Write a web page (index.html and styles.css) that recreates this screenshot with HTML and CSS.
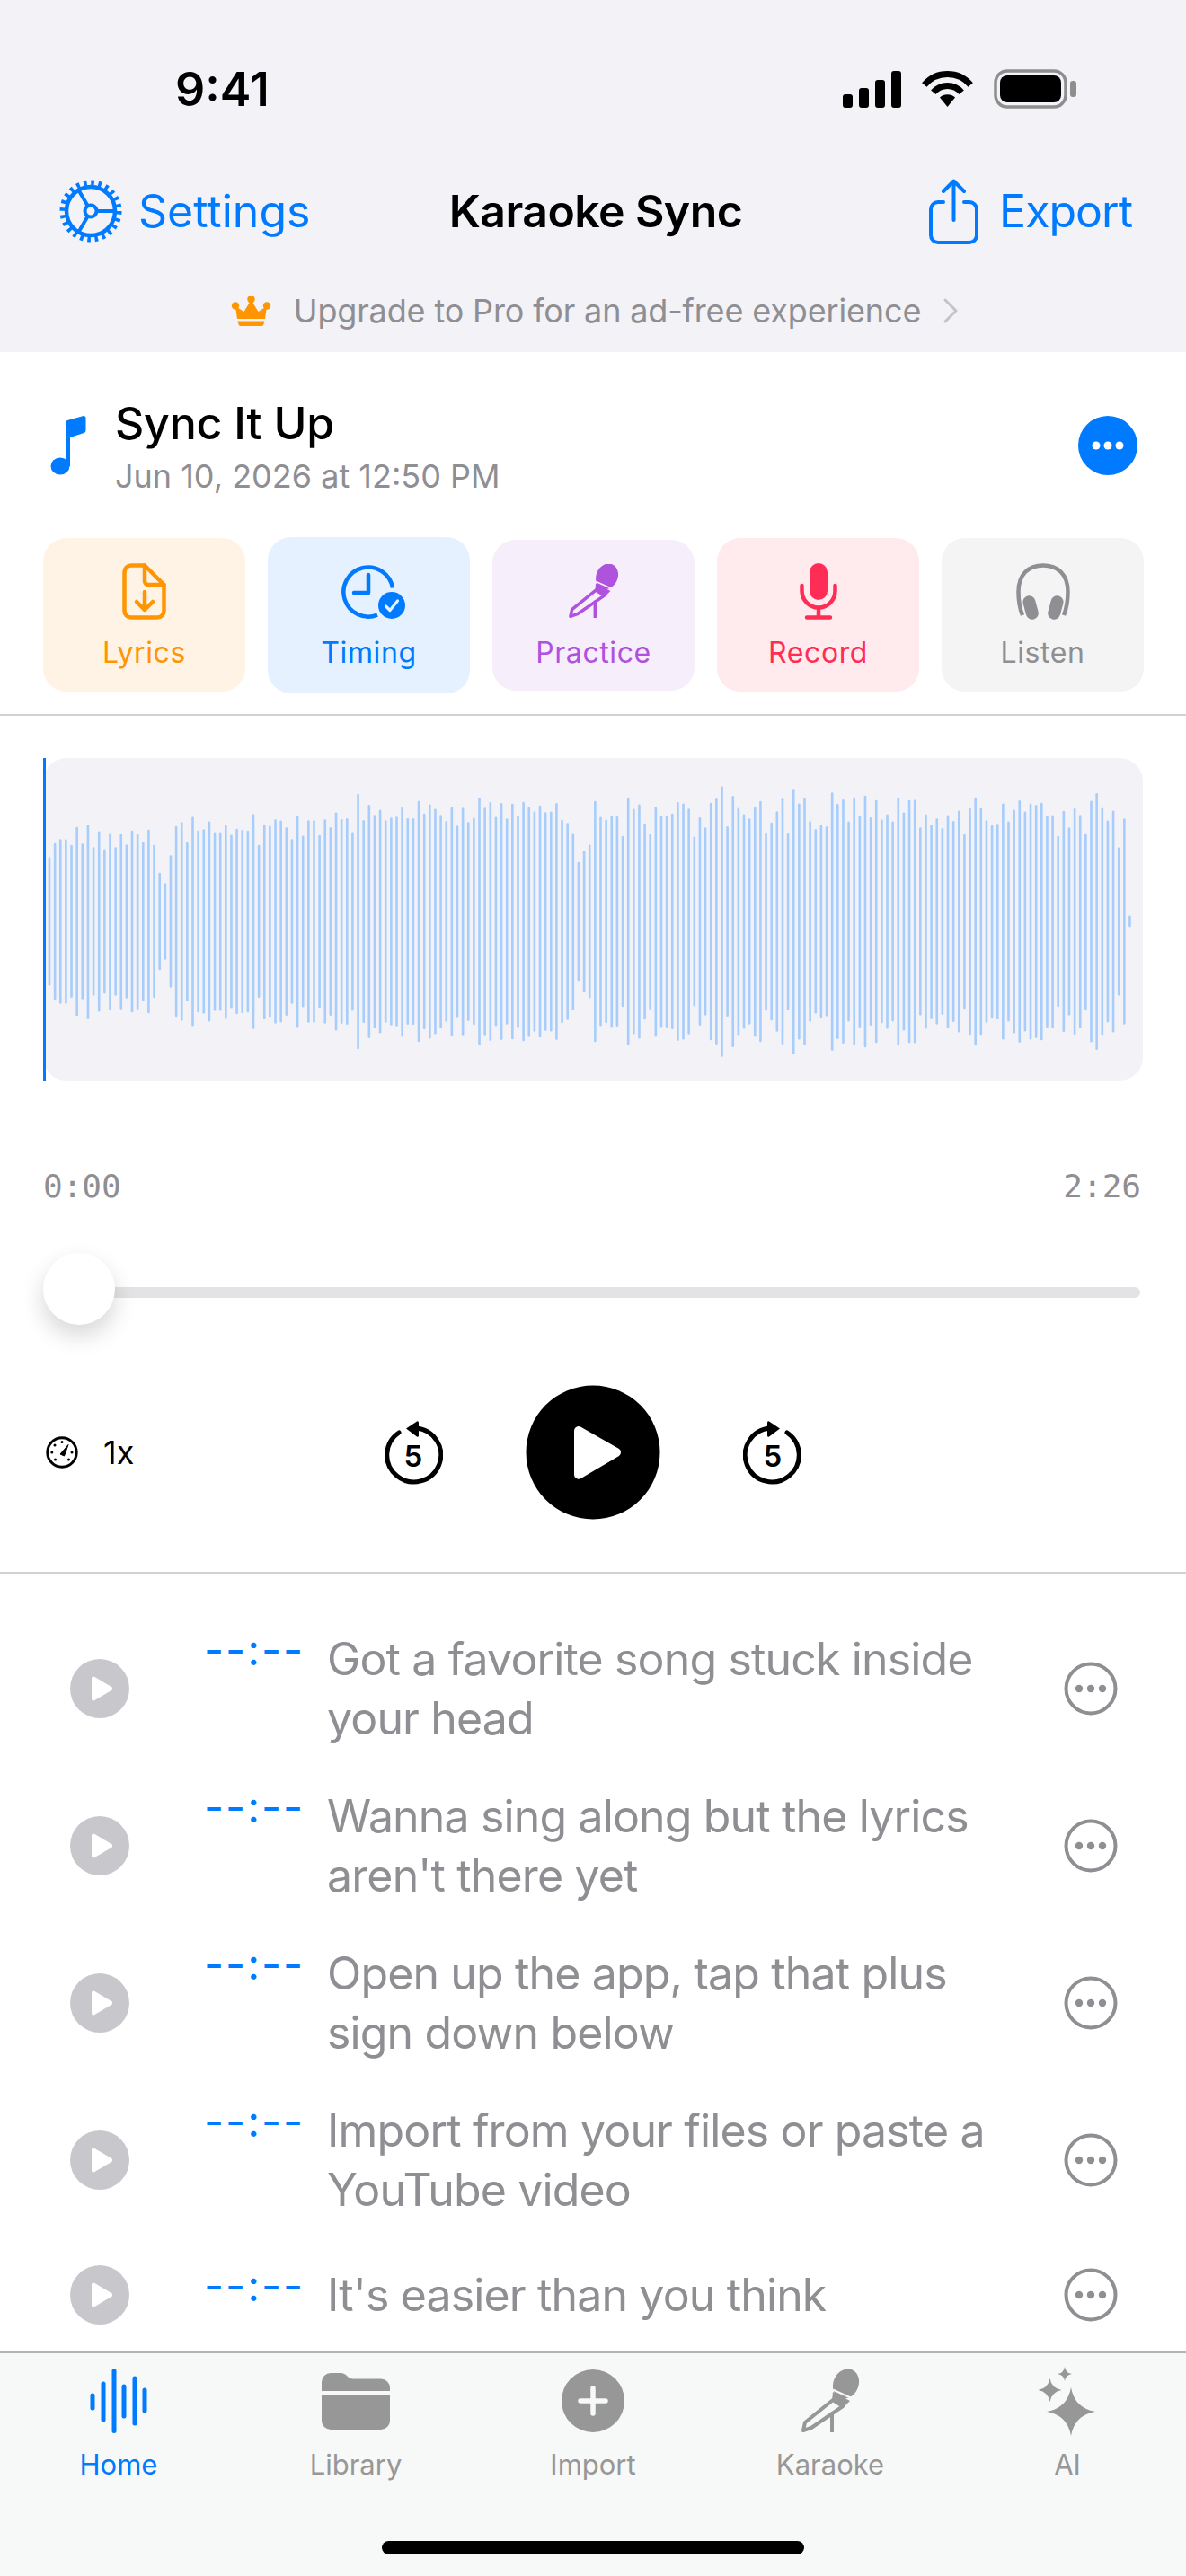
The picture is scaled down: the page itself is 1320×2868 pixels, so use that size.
FILE: index.html
```html
<!DOCTYPE html>
<html lang="en">
<head>
<meta charset="UTF-8">
<meta name="viewport" content="width=device-width, initial-scale=1.0">
<title>Karaoke Sync</title>
<link rel="stylesheet" href="styles.css">
</head>
<body>
<svg class="sprites">
    <symbol id="line-play" viewBox="0 0 66 66"><circle cx="33" cy="33" r="33" fill="#c7c7cc"/><path d="M24 21.5a2 2 0 0 1 3-1.7L46 31a2.3 2.3 0 0 1 0 4L27 46.2a2 2 0 0 1-3-1.700Z" fill="#fff"/></symbol>
    <symbol id="line-more" viewBox="0 0 60 60"><circle cx="30" cy="30" r="27.5" fill="none" stroke="#8e8e93" stroke-width="4"/><circle cx="17" cy="30" r="4.2" fill="#8e8e93"/><circle cx="30" cy="30" r="4.2" fill="#8e8e93"/><circle cx="43" cy="30" r="4.2" fill="#8e8e93"/></symbol>
    <symbol id="skip-arrow" viewBox="0 0 66 72"><path d="M17 14A30 30 0 1 0 36 9" fill="none" stroke="#000" stroke-width="5" stroke-linecap="round"/><path d="M37 1.5L25 9.5L37 18.5a1.5 1.5 0 0 0 2-1V2.5a1.5 1.5 0 0 0-2-1Z"/></symbol>
</svg>

<div id="app">
    <header class="top">
        <div class="status">
            <span class="clock">9:41</span>
            <div class="status-icons">
                <svg width="65" height="41" viewBox="0 0 65 41"><rect x="0" y="26" width="11" height="15" rx="3"/><rect x="18" y="19" width="11" height="22" rx="3"/><rect x="36" y="10" width="11" height="31" rx="3"/><rect x="54" y="0" width="11" height="41" rx="3"/></svg>
                <svg width="57" height="42" viewBox="0 0 57 42" fill="none" stroke="#000" stroke-width="7"><path d="M2.8 16.5A33.5 33.5 0 0 1 54.2 16.5"/><path d="M12.8 24.8A20.5 20.5 0 0 1 44.2 24.8"/><path d="M28.5 41L20 30.5A13 13 0 0 1 37 30.5Z" fill="#000" stroke="none"/></svg>
                <svg width="92" height="44" viewBox="0 0 92 44"><rect x="2" y="2" width="78" height="40" rx="13" fill="none" stroke="#8e8e8e" stroke-width="3.5"/><rect x="7" y="7" width="68" height="30" rx="8"/><rect x="85" y="13" width="7" height="18" rx="3" fill="#8e8e8e"/></svg>
            </div>
        </div>
        <nav class="nav">
            <a class="nav-btn">
                <svg width="70" height="70" viewBox="0 0 70 70" fill="none" stroke="#007aff"><circle cx="35" cy="35" r="27" stroke-width="4.5"/><circle cx="35" cy="35" r="31.5" stroke-width="6" stroke-dasharray="3.6 4.65"/><circle cx="35" cy="35" r="6.5" stroke-width="4"/><path d="M41.5 35H60M31.7 29.3L21.5 11.7M31.7 40.7L21.5 58.3" stroke-width="4"/></svg>
                <span>Settings</span>
            </a>
            <h1>Karaoke Sync</h1>
            <a class="nav-btn nav-right">
                <svg width="55" height="73" viewBox="0 0 55 73" fill="none" stroke="#007aff" stroke-width="4" stroke-linecap="round" stroke-linejoin="round"><path d="M16 26H10a8 8 0 0 0-8 8V63a8 8 0 0 0 8 8H45a8 8 0 0 0 8-8V34a8 8 0 0 0-8-8H39"/><path d="M27.5 46V3M16 14L27.5 2.5L39 14"/></svg>
                <span>Export</span>
            </a>
        </nav>
        <div class="promo">
            <svg width="46" height="34" viewBox="0 0 46 34" fill="#ff9500"><circle cx="5" cy="11.5" r="4.2"/><circle cx="22.5" cy="4.2" r="4.2"/><circle cx="40" cy="11.5" r="4.2"/><path d="M7 26L5 12L14.5 18L22.5 5L30.5 18L40 12L38 26Z"/><path d="M7.5 28.5H37.5L36.5 32a2.5 2.5 0 0 1-2.5 2H11a2.5 2.5 0 0 1-2.5-2Z"/></svg>
            <span>Upgrade to Pro for an ad-free experience</span>
            <svg width="18" height="30" viewBox="0 0 18 30" fill="none" stroke="#c4c4c6" stroke-width="3" stroke-linecap="round" stroke-linejoin="round"><path d="M3 3L15 15L3 27"/></svg>
        </div>
    </header>

    <section class="song">
        <svg width="40" height="66" viewBox="0 0 40 66" fill="#007aff"><ellipse cx="11" cy="56" rx="10.5" ry="9.5"/><path d="M17 8a3 3 0 0 1 2-3L36 .3A2.5 2.5 0 0 1 39.5 3V16a3 3 0 0 1-2 3L22 24V56H17Z"/></svg>
        <div class="song-text">
            <div class="song-title">Sync It Up</div>
            <div class="song-date">Jun 10, 2026 at 12:50 PM</div>
        </div>
        <svg width="66" height="66" viewBox="0 0 66 66"><circle cx="33" cy="33" r="33" fill="#007aff"/><circle cx="20" cy="33" r="4.5" fill="#fff"/><circle cx="33" cy="33" r="4.5" fill="#fff"/><circle cx="46" cy="33" r="4.5" fill="#fff"/></svg>
    </section>

    <section class="tools">
        <div class="tool tool-lyrics">
            <div class="tool-icon"><svg width="49" height="63" viewBox="0 0 49 63" fill="none" stroke="#ff9500" stroke-width="4.5" stroke-linecap="round" stroke-linejoin="round"><path d="M2.5 10A7.5 7.5 0 0 1 10 2.5H25L46.5 24V53A7.5 7.5 0 0 1 39 60.5H10A7.5 7.5 0 0 1 2.5 53Z"/><path d="M25 2.5V20a4 4 0 0 0 4 4H46.5"/><path d="M25 32V52M16 43L25 52L34 43"/></svg></div>
            <span>Lyrics</span>
        </div>
        <div class="tool tool-timing">
            <div class="tool-icon"><svg class="timing-svg" width="71" height="60" viewBox="0 0 71 60" fill="none" stroke="#007aff" stroke-width="4.5" stroke-linecap="round" stroke-linejoin="round"><path d="M57 25.5A27.5 27.5 0 1 0 40 55.6" stroke-linecap="butt"/><path d="M30 11V31H14"/><circle cx="56" cy="45" r="15" fill="#007aff" stroke="none"/><path d="M49.5 46L54 50.5L62.5 40" stroke="#e5f1ff" stroke-width="3.2"/></svg></div>
            <span>Timing</span>
        </div>
        <div class="tool tool-practice">
            <div class="tool-icon"><svg width="60" height="60" viewBox="0 0 67 70" fill="none" stroke="#af52de" stroke-width="4" stroke-linejoin="round" stroke-linecap="round"><ellipse cx="50.5" cy="16" rx="14" ry="17" transform="rotate(25 50.5 16)" fill="#af52de" stroke="none"/><path d="M36 25L55 35L48 42L35 35Z" fill="#af52de" stroke="none"/><path d="M37 23L59 33" stroke="#f6eefb" stroke-width="2"/><path d="M36 34L47 41L12 65L3 68L5 59Z"/><path d="M35 49V69"/></svg></div>
            <span>Practice</span>
        </div>
        <div class="tool tool-record">
            <div class="tool-icon"><svg width="44" height="63" viewBox="0 0 44 63" fill="none" stroke="#ff2d55" stroke-width="4.5" stroke-linecap="round"><rect x="12" y="0" width="20" height="41" rx="10" fill="#ff2d55" stroke="none"/><path d="M3.5 25V31a18.5 18.5 0 0 0 37 0V25"/><path d="M22 50V60M9 60.5H35"/></svg></div>
            <span>Record</span>
        </div>
        <div class="tool tool-listen">
            <div class="tool-icon"><svg width="60" height="64" viewBox="0 0 60 64" fill="none" stroke="#8e8e93" stroke-width="4.5"><path d="M7 58C3 48 2.5 40 2.5 32C2.5 12 14 2.5 30 2.5S57.5 12 57.5 32C57.5 40 57 48 53 58"/><rect x="9" y="36" width="14" height="27" rx="7" transform="rotate(-15 16 49)" fill="#8e8e93" stroke="none"/><rect x="37" y="36" width="14" height="27" rx="7" transform="rotate(15 44 49)" fill="#8e8e93" stroke="none"/></svg></div>
            <span>Listen</span>
        </div>
    </section>

    <section class="player">
        <div class="wave">
            <svg id="bars" width="1224" height="359" viewBox="0 0 1224 359"></svg>
            <div class="playhead"></div>
        </div>
        <div class="times">
            <span>0:00</span>
            <span>2:26</span>
        </div>
        <div class="slider">
            <div class="track"></div>
            <div class="thumb"></div>
        </div>
        <div class="controls">
            <div class="speed">
                <svg width="36" height="36" viewBox="0 0 36 36" fill="none" stroke="#000"><circle cx="18" cy="18" r="16.2" stroke-width="3"/><path d="M16 20L25 9.5L20.5 22Z" fill="#000" stroke="#000" stroke-width="1" stroke-linejoin="round"/><path d="M18 6.5v.1M10 10v.1M6.8 18v.1M29 18v.1M10.5 26v.1M25.5 26v.1" stroke-width="3" stroke-linecap="round"/></svg>
                <span>1x</span>
            </div>
            <div class="transport">
                <svg width="66" height="72" viewBox="0 0 66 72"><use href="#skip-arrow"/><text class="skip-num" x="33" y="52" text-anchor="middle">5</text></svg>
                <svg width="150" height="150" viewBox="0 0 150 150"><circle cx="75" cy="75" r="74.5"/><path d="M54 51a5 5 0 0 1 7.5-4.3L104 71a5 5 0 0 1 0 8L61.5 104a5 5 0 0 1-7.5-4.3Z" fill="#fff"/></svg>
                <svg width="66" height="72" viewBox="0 0 66 72"><use href="#skip-arrow" transform="translate(66 0) scale(-1 1)"/><text class="skip-num" x="33" y="52" text-anchor="middle">5</text></svg>
            </div>
            <div></div>
        </div>
    </section>

    <section class="lyrics">
        <div class="line">
            <svg width="66" height="66"><use href="#line-play"/></svg>
            <div class="line-body">
                <span class="line-time">--:--</span>
                <p>Got a favorite song stuck inside your head</p>
            </div>
            <svg width="60" height="60"><use href="#line-more"/></svg>
        </div>
        <div class="line">
            <svg width="66" height="66"><use href="#line-play"/></svg>
            <div class="line-body">
                <span class="line-time">--:--</span>
                <p>Wanna sing along but the lyrics aren't there yet</p>
            </div>
            <svg width="60" height="60"><use href="#line-more"/></svg>
        </div>
        <div class="line">
            <svg width="66" height="66"><use href="#line-play"/></svg>
            <div class="line-body">
                <span class="line-time">--:--</span>
                <p>Open up the app, tap that plus sign down below</p>
            </div>
            <svg width="60" height="60"><use href="#line-more"/></svg>
        </div>
        <div class="line">
            <svg width="66" height="66"><use href="#line-play"/></svg>
            <div class="line-body">
                <span class="line-time">--:--</span>
                <p>Import from your files or paste a YouTube video</p>
            </div>
            <svg width="60" height="60"><use href="#line-more"/></svg>
        </div>
        <div class="line">
            <svg width="66" height="66"><use href="#line-play"/></svg>
            <div class="line-body">
                <span class="line-time">--:--</span>
                <p>It's easier than you think</p>
            </div>
            <svg width="60" height="60"><use href="#line-more"/></svg>
        </div>
    </section>

    <footer class="tabbar">
        <div class="tabs">
            <div class="tab tab-active">
                <div class="tab-icon"><svg width="64" height="72" viewBox="0 0 64 72" fill="none" stroke="#007aff" stroke-width="5" stroke-linecap="round"><path d="M3 30V44M15 17V57M27 2.5V69.5M38 20V53M50 11V61M61 24V47"/></svg></div>
                <span>Home</span>
            </div>
            <div class="tab">
                <div class="tab-icon"><svg width="76" height="63" viewBox="0 0 76 63" fill="#979797"><path d="M0 20V10A10 10 0 0 1 10 0H20C25 0 27 2 29 4S33 6.5 37 6.5H66A10 10 0 0 1 76 16.5V20Z"/><path d="M0 24H76V53A10 10 0 0 1 66 63H10A10 10 0 0 1 0 53Z"/></svg></div>
                <span>Library</span>
            </div>
            <div class="tab">
                <div class="tab-icon"><svg width="70" height="70" viewBox="0 0 70 70"><circle cx="35" cy="35" r="35" fill="#979797"/><path d="M35 21V49M21 35H49" stroke="#f7f8f8" stroke-width="5.5" stroke-linecap="round"/></svg></div>
                <span>Import</span>
            </div>
            <div class="tab">
                <div class="tab-icon"><svg width="67" height="70" viewBox="0 0 67 70" fill="none" stroke="#979797" stroke-width="4" stroke-linejoin="round" stroke-linecap="round"><ellipse cx="50.5" cy="16" rx="14" ry="17" transform="rotate(25 50.5 16)" fill="#979797" stroke="none"/><path d="M36 25L55 35L48 42L35 35Z" fill="#979797" stroke="none"/><path d="M37 23L59 33" stroke="#f7f8f8" stroke-width="2"/><path d="M36 34L47 41L12 65L3 68L5 59Z"/><path d="M35 49V69"/></svg></div>
                <span>Karaoke</span>
            </div>
            <div class="tab">
                <div class="tab-icon"><svg width="66" height="78" viewBox="0 0 66 78" fill="#979797"><path d="M37 24Q41 47 64 51Q41 55 37 78Q33 55 10 51Q33 47 37 24Z"/><path d="M13.5 14Q15.5 25 26.5 27Q15.5 29 13.5 40Q11.5 29 .5 27Q11.5 25 13.5 14Z"/><path d="M30 1Q31 8 38 9Q31 10 30 17Q29 10 22 9Q29 8 30 1Z"/></svg></div>
                <span>AI</span>
            </div>
        </div>
        <div class="home-bar"></div>
    </footer>
</div>

<script>
    // peak size of each bar, left to right
    const peaks = [
        213, 259, 273, 273, 253, 313, 258, 321, 246, 299, 239, 293, 246, 291, 255, 301, 291, 263, 304, 253,
        161, 127, 219, 316, 329, 263, 346, 301, 305, 331, 296, 296, 320, 287, 307, 303, 301, 356, 253, 322,
        317, 338, 334, 312, 273, 349, 284, 335, 335, 286, 338, 312, 361, 339, 342, 296, 423, 336, 386, 353,
        370, 335, 344, 347, 379, 342, 342, 399, 357, 388, 373, 353, 332, 378, 317, 377, 329, 343, 410, 377,
        395, 346, 392, 341, 390, 350, 396, 380, 365, 384, 362, 364, 392, 337, 326, 293, 197, 235, 254,
        399, 346, 337, 349, 348, 283, 409, 373, 388, 325, 291, 379, 349, 351, 357, 395, 391, 374, 281, 345,
        311, 393, 407, 448, 315, 416, 376, 355, 341, 379, 399, 295, 328, 365, 407, 294, 439, 391, 409, 332,
        305, 319, 314, 427, 389, 404, 331, 409, 351, 417, 345, 402, 337, 355, 331, 411, 361, 402, 403, 311,
        355, 321, 341, 309, 352, 333, 367, 289, 375, 411, 375, 335, 319, 323, 391, 331, 370, 401, 364, 391,
        386, 393, 351, 352, 283, 366, 311, 375, 353, 292, 400, 425, 376, 334, 367, 245, 341, 19
    ];

    const bars = document.getElementById("bars");
    peaks.forEach((peak, i) => {
        const height = peak * 0.673;
        const bar = document.createElementNS("http://www.w3.org/2000/svg", "rect");
        bar.setAttribute("class", "bar");
        bar.setAttribute("x", 5.7 + i * 6.135);
        bar.setAttribute("y", 182 - height / 2);
        bar.setAttribute("width", 2.6);
        bar.setAttribute("height", height);
        bar.setAttribute("rx", 1.3);
        bars.appendChild(bar);
    });
</script>
</body>
</html>
```
FILE: styles.css
```css
* {
    box-sizing: border-box;
}

body {
    margin: 0;
    font-family: Inter, "Noto Sans", sans-serif;
    background-color: #fff;
    color: #000;
}

.sprites {
    display: none;
}

#app {
    width: 1320px;
    height: 2868px;
    display: flex;
    flex-direction: column;
    overflow: hidden;
}

svg {
    display: block;
    flex-shrink: 0;
}

/* header */
.top {
    background-color: #f2f2f7;
    height: 392px;
}

.status {
    height: 198px;
    padding: 0 122px 0 195px;
    display: flex;
    justify-content: space-between;
    align-items: center;
}

.clock {
    font-size: 52px;
    font-weight: 600;
}

.status-icons {
    display: flex;
    align-items: center;
    gap: 23px;
}

.nav {
    height: 74px;
    padding: 0 60px 0 66px;
    display: grid;
    grid-template-columns: 1fr auto 1fr;
    align-items: center;
}

.nav h1 {
    margin: 0;
    font-size: 50px;
    font-weight: 600;
    letter-spacing: -0.6px;
}

.nav-btn {
    display: flex;
    align-items: center;
    gap: 18px;
    font-size: 50px;
    color: #007aff;
}

.nav-right {
    justify-content: flex-end;
    gap: 23px;
    letter-spacing: -1px;
}

.promo {
    height: 92px;
    margin-top: 28px;
    padding-left: 4px;
    display: flex;
    justify-content: center;
    align-items: center;
    gap: 24px;
    font-size: 36px;
    letter-spacing: -0.15px;
    color: #8e8e93;
}

/* song */
.song {
    height: 207px;
    padding: 1px 54px 0 56px;
    display: flex;
    align-items: center;
}

.song-text {
    flex: 1;
    margin-left: 32px;
}

.song-title {
    font-size: 50px;
    font-weight: 500;
    line-height: 60px;
    letter-spacing: -0.2px;
}

.song-date {
    margin-top: 7px;
    font-size: 36px;
    line-height: 44px;
    color: #8e8e93;
}

.tools {
    height: 198px;
    padding: 0 48px;
    display: grid;
    grid-template-columns: repeat(5, 225px);
    gap: 25px;
    border-bottom: 2px solid #d1d1d6;
}

.tool {
    height: 171px;
    padding-top: 28px;
    border-radius: 26px;
    display: flex;
    flex-direction: column;
    align-items: center;
    font-size: 32px;
    letter-spacing: 0.6px;
}

.tool-icon {
    height: 63px;
    margin-bottom: 17px;
    display: flex;
    justify-content: center;
    align-items: center;
}

.tool span {
    line-height: 40px;
}

.timing-svg {
    margin-left: 10px;
}

.tool-lyrics {
    background-color: #fff3e5;
    color: #ff9500;
}

.tool-timing {
    height: 174px;
    margin-top: -1.5px;
    padding-top: 29.5px;
    background-color: #e5f1ff;
    color: #007aff;
}

.tool-practice {
    height: 168px;
    margin-top: 1.5px;
    padding-top: 26px;
    background-color: #f6eefb;
    color: #af52de;
}

.tool-record {
    background-color: #ffebee;
    color: #ff2d55;
}

.tool-listen {
    background-color: #f4f4f4;
    color: #8e8e93;
}

/* player */
.player {
    height: 955px;
    padding: 47px 48px 0;
    border-bottom: 2px solid #d1d1d6;
}

.wave {
    position: relative;
    height: 359px;
    background-color: #f2f2f7;
    border-radius: 26px;
}

.bar {
    fill: #a6cdfb;
}

.playhead {
    position: absolute;
    left: 0;
    top: 0;
    width: 3px;
    height: 100%;
    background-color: #007aff;
}

.times {
    margin-top: 97px;
    height: 40px;
    padding-right: 2px;
    display: flex;
    justify-content: space-between;
    align-items: center;
    font-family: "DejaVu Sans Mono", monospace;
    font-size: 36px;
    color: #8e8e93;
}

.slider {
    position: relative;
    height: 80px;
    margin: 55px 3px 0 0;
    display: flex;
    align-items: center;
}

.track {
    flex: 1;
    height: 12px;
    margin: 8px 0 0 32px;
    border-radius: 6px;
    background-color: #e3e3e5;
}

.thumb {
    position: absolute;
    left: 0;
    top: 0;
    width: 80px;
    height: 80px;
    border-radius: 50%;
    background-color: #fff;
    box-shadow: 0 12px 26px rgba(0, 0, 0, 0.16);
}

.controls {
    height: 150px;
    margin-top: 67px;
    display: grid;
    grid-template-columns: 1fr auto 1fr;
    align-items: center;
}

.speed {
    padding-left: 3px;
    display: flex;
    align-items: center;
    gap: 28px;
    font-size: 36px;
}

.transport {
    display: flex;
    align-items: center;
    gap: 92px;
}

.skip-num {
    font-family: Inter, sans-serif;
    font-size: 33px;
    font-weight: 600;
}

/* lyric lines */
.lyrics {
    flex: 1;
    min-height: 0;
    padding: 40px 0 0 78px;
    overflow: hidden;
}

.line {
    min-height: 125px;
    padding: 21.5px 0;
    display: flex;
    align-items: center;
    color: #8e8e93;
}

.line-body {
    display: flex;
    align-items: flex-start;
    margin: 0 80px 0 83px;
}

.line-time {
    width: 110px;
    font-size: 48px;
    line-height: 46px;
    letter-spacing: 2px;
    white-space: nowrap;
    color: #007aff;
}

.line p {
    width: 740px;
    margin: 0 0 0 27px;
    font-size: 50px;
    line-height: 66px;
    letter-spacing: -0.85px;
}

/* tab bar */
.tabbar {
    height: 250px;
    flex-shrink: 0;
    border-top: 2px solid #b4b4b4;
    background-color: #f7f8f8;
    position: relative;
}

.tabs {
    display: grid;
    grid-template-columns: repeat(5, 1fr);
    padding-top: 14px;
}

.tab {
    display: flex;
    flex-direction: column;
    align-items: center;
    font-size: 31px;
    color: #979797;
}

.tab-icon {
    height: 78px;
    margin-bottom: 13px;
    display: flex;
    align-items: center;
    justify-content: center;
}

.tab-active {
    color: #007aff;
}

.home-bar {
    position: absolute;
    left: 425px;
    bottom: 24px;
    width: 470px;
    height: 15px;
    border-radius: 8px;
    background-color: #000;
}
```
